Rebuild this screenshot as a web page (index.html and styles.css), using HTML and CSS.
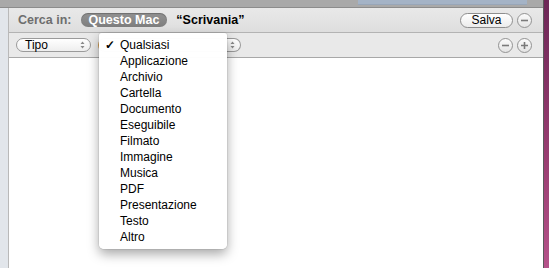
FILE: index.html
```html
<!DOCTYPE html>
<html>
<head>
  <link rel="stylesheet" href="styles.css">
</head>
<body>
  <div class="screen">
    <div class="window">
      <div class="toolbar-edge"><div class="search-edge"></div></div>
      <div class="main">
        <div class="sidebar"></div>
        <div class="pane">
          <div class="scope-bar">
            <span class="scope-label">Cerca in:</span>
            <span class="scope-pill">Questo Mac</span>
            <span class="scope-place">&ldquo;Scrivania&rdquo;</span>
            <span class="spacer"></span>
            <button class="push-btn">Salva</button>
            <span class="round-btn">
              <svg width="9" height="9" viewBox="0 0 9 9"><path d="M1 4.5h7" stroke="#7a7a7a" stroke-width="1.6"/></svg>
            </span>
          </div>
          <div class="criteria-bar">
            <span class="popup popup-kind">Tipo
              <svg class="arrows" width="5" height="8" viewBox="0 0 5 8"><path d="M0.5 3L2.5 0.5 4.5 3zM0.5 5L2.5 7.5 4.5 5z" fill="#8a8a8a"/></svg>
            </span>
            <span class="popup popup-value">
              <svg class="arrows" width="5" height="8" viewBox="0 0 5 8"><path d="M0.5 3L2.5 0.5 4.5 3zM0.5 5L2.5 7.5 4.5 5z" fill="#8a8a8a"/></svg>
            </span>
            <span class="spacer"></span>
            <span class="round-btn">
              <svg width="9" height="9" viewBox="0 0 9 9"><path d="M1 4.5h7" stroke="#7a7a7a" stroke-width="1.6"/></svg>
            </span>
            <span class="round-btn">
              <svg width="9" height="9" viewBox="0 0 9 9"><path d="M1 4.5h7M4.5 1v7" stroke="#7a7a7a" stroke-width="1.6"/></svg>
            </span>
          </div>
          <div class="results"></div>
        </div>
      </div>
    </div>
    <div class="desktop"></div>
  </div>

  <ul class="menu">
    <li class="checked">Qualsiasi</li>
    <li>Applicazione</li>
    <li>Archivio</li>
    <li>Cartella</li>
    <li>Documento</li>
    <li>Eseguibile</li>
    <li>Filmato</li>
    <li>Immagine</li>
    <li>Musica</li>
    <li>PDF</li>
    <li>Presentazione</li>
    <li>Testo</li>
    <li>Altro</li>
  </ul>
</body>
</html>
```

FILE: styles.css
```css
body {
  margin: 0;
  overflow: hidden;
  font-family: 'Liberation Sans', Arial, sans-serif;
  font-size: 12px;
  color: #000;
}
.screen {
  display: flex;
  width: 549px;
  height: 268px;
}
.window {
  width: 543px;
  border-right: 1px solid #5a5a5a;
  display: flex;
  flex-direction: column;
  background: #ffffff;
}
.desktop {
  flex: 1;
  background: linear-gradient(#6d2757, #9a3f72 60%, #b5538a);
}
.toolbar-edge {
  height: 7px;
  background: #a9a9a9;
  border-bottom: 1px solid #8c8c8c;
  display: flex;
  justify-content: flex-end;
}
.search-edge {
  width: 169px;
  height: 4px;
  margin-right: 16px;
  background: #a4b3c6;
  border-bottom: 1px solid #98a6b8;
}
.main {
  flex: 1;
  display: flex;
}
.sidebar {
  width: 8px;
  background: #e2e6eb;
  border-right: 1px solid #b9b9b9;
}
.pane {
  flex: 1;
  display: flex;
  flex-direction: column;
}
.scope-bar {
  height: 24px;
  display: flex;
  align-items: center;
  padding: 0 11px 0 9px;
  background: linear-gradient(#e9e9e9, #dedede);
  border-bottom: 1px solid #b3b3b3;
}
.scope-label {
  font-weight: bold;
  color: #6e6e6e;
  font-size: 12.5px;
}
.scope-pill {
  margin-left: 9px;
  height: 14px;
  line-height: 14px;
  padding: 0 8px;
  border-radius: 8px;
  background: linear-gradient(#939393, #7e7e7e);
  color: #fff;
  font-weight: bold;
  font-size: 12.5px;
  box-shadow: inset 0 1px 1px rgba(0, 0, 0, 0.25);
}
.scope-place {
  margin-left: 9px;
  font-weight: bold;
  font-size: 12.5px;
}
.spacer {
  flex: 1;
}
.push-btn {
  font-family: inherit;
  font-size: 12px;
  height: 15px;
  width: 53px;
  padding: 0;
  border: 1px solid #8e8e8e;
  border-radius: 8px;
  background: linear-gradient(#ffffff, #ececec);
  line-height: 12px;
}
.round-btn {
  width: 13px;
  height: 13px;
  margin-left: 4px;
  border: 1px solid #939393;
  border-radius: 50%;
  background: linear-gradient(#fbfbfb, #e4e4e4);
  display: flex;
  align-items: center;
  justify-content: center;
}
.criteria-bar {
  height: 24px;
  display: flex;
  align-items: center;
  padding: 0 11px 0 7px;
  background: #e9e9e9;
  border-bottom: 1px solid #a8a8a8;
}
.popup {
  height: 12px;
  border: 1px solid #9a9a9a;
  border-radius: 7px;
  background: linear-gradient(#ffffff, #eeeeee);
  display: flex;
  align-items: center;
  padding: 0 5px 0 8px;
  font-size: 12px;
  line-height: 12px;
}
.popup-kind {
  width: 60px;
  justify-content: space-between;
}
.popup-value {
  width: 128px;
  margin-left: 7px;
  justify-content: flex-end;
  border-left-color: #d49a4a;
}
.results {
  flex: 1;
  background: #ffffff;
}
.menu {
  position: absolute;
  left: 99px;
  top: 33px;
  width: 128px;
  margin: 0;
  padding: 4px 0;
  list-style: none;
  background: rgba(255, 255, 255, 0.98);
  border-radius: 3px 3px 5px 5px;
  box-shadow: 0 5px 12px rgba(0, 0, 0, 0.35), 0 0 0 1px rgba(0, 0, 0, 0.06);
}
.menu li {
  height: 16px;
  line-height: 16px;
  padding-left: 21px;
  font-size: 12px;
  position: relative;
}
.menu li.checked::before {
  content: "\2713";
  position: absolute;
  left: 6px;
  font-size: 12px;
  font-weight: bold;
}
```
